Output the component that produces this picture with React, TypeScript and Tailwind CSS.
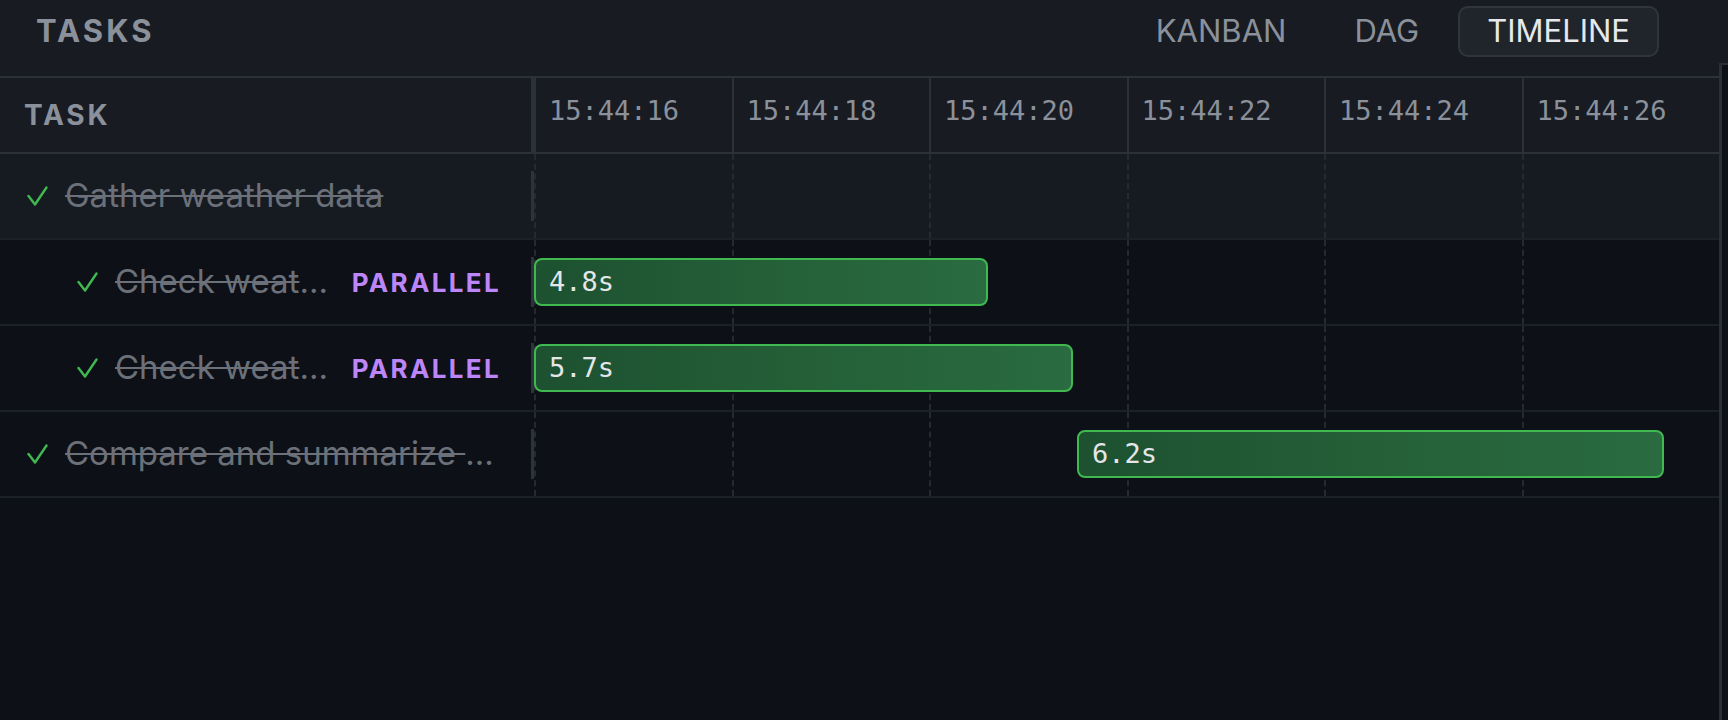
import React from "react"

type Row = {
    name: string
    depth: number
    parallel?: boolean
    bar?: { start: number; dur: number }
    raised?: boolean
}

const rows: Row[] = [
    { name: "Gather weather data", depth: 0, raised: true },
    { name: "Check weather in Tokyo", depth: 1, parallel: true, bar: { start: 0, dur: 4.8 } },
    { name: "Check weather in Paris", depth: 1, parallel: true, bar: { start: 0, dur: 5.7 } },
    { name: "Compare and summarize forecasts", depth: 0, bar: { start: 5.74, dur: 6.2 } },
]

const ticks = ["15:44:16", "15:44:18", "15:44:20", "15:44:22", "15:44:24", "15:44:26"]

// px per second on the timeline
const PPS = 94.6

const Check = () => (
    <svg width="21" height="20" viewBox="0 0 21 20" className="shrink-0">
        <polyline points="1.5,10 8,18.5 19.5,1.5" fill="none" stroke="#3fb950" strokeWidth="2.4" strokeLinecap="round" strokeLinejoin="round" />
    </svg>
)

const TaskRow = ({ row }: { row: Row }) => {
    return (
        <div className={`flex h-[86px] border-b-2 border-[#1c2028] ${row.raised ? "bg-[#161a21]" : "bg-[#0d1017]"}`}>
            <div className={`flex w-[531px] shrink-0 items-center gap-[17px] pr-[30px] ${row.depth ? "pl-[77px]" : "pl-[27px]"}`}>
                <Check />
                <span className="min-w-0 flex-1 truncate text-[33px] text-[#6b7079] line-through decoration-2">{row.name}</span>
                {row.parallel && (
                    <span className="shrink-0 text-[26px] font-bold tracking-[0.09em] text-[#bd86f8]">PARALLEL</span>
                )}
            </div>
            <div className="flex w-[3px] shrink-0 items-center">
                <div className="h-[50px] w-[3px] bg-[#2e323a]" />
            </div>
            <div className="relative grid flex-1 grid-cols-6">
                {ticks.map((t) => (
                    <div key={t} className="border-l-2 border-dashed border-[#252a32]" />
                ))}
                {row.bar && (
                    <div
                        className="absolute top-1/2 flex h-[48px] -translate-y-1/2 items-center rounded-[8px] border-2 border-[#3fb950] bg-gradient-to-r from-[#1d5130] via-[#245f38] to-[#2a6b41] pl-[13px]"
                        style={{ left: row.bar.start * PPS, width: row.bar.dur * PPS }}
                    >
                        <span className="font-['DejaVu_Sans_Mono',monospace] text-[27px] text-[#e4e6e9]">{row.bar.dur}s</span>
                    </div>
                )}
            </div>
        </div>
    )
}

const App = () => {
    return (
        <div className="flex h-[720px] w-[1728px] overflow-hidden bg-[#0d1017] font-['Inter',sans-serif]">
            <div className="flex w-[1719px] shrink-0 flex-col">
                {/* top bar */}
                <div className="flex h-[78px] shrink-0 items-start justify-between border-b-2 border-[#2c3038] bg-[#181b22] pl-[36px] pr-[60px] pt-[6px]">
                    <div className="flex h-[51px] items-center text-[31px] font-bold tracking-[0.1em] text-[#8b919b]">TASKS</div>
                    <div className="flex gap-[10px] text-[31px]">
                        <button className="h-[51px] rounded-[10px] border-2 border-transparent px-[27px] text-[#8b919b]">KANBAN</button>
                        <button className="h-[51px] rounded-[10px] border-2 border-transparent px-[27px] text-[#8b919b]">DAG</button>
                        <button className="h-[51px] rounded-[10px] border-2 border-[#30353d] bg-[#20242b] px-[27px] text-[#e6e8eb]">TIMELINE</button>
                    </div>
                </div>

                {/* column header */}
                <div className="flex h-[76px] shrink-0 border-b-2 border-[#2c3038] bg-[#181b22]">
                    <div className="flex w-[531px] shrink-0 items-center pl-[24px] text-[28px] font-bold tracking-[0.1em] text-[#8b919b]">TASK</div>
                    <div className="w-[3px] shrink-0 bg-[#2c3038]" />
                    <div className="grid flex-1 grid-cols-6">
                        {ticks.map((t) => (
                            <div key={t} className="flex items-center border-l-2 border-[#2c3038] pb-[8px] pl-[13px] font-['DejaVu_Sans_Mono',monospace] text-[27px] text-[#8b919b]">
                                {t}
                            </div>
                        ))}
                    </div>
                </div>

                {rows.map((r) => (
                    <TaskRow key={r.name} row={r} />
                ))}
            </div>

            {/* scrollbar gutter */}
            <div className="flex flex-1 flex-col">
                <div className="h-[63px] bg-[#181b22]" />
                <div className="flex-1 border-l-[3px] border-t-2 border-[#2a2e36] bg-[#0d1017]" />
            </div>
        </div>
    )
}

export default App
